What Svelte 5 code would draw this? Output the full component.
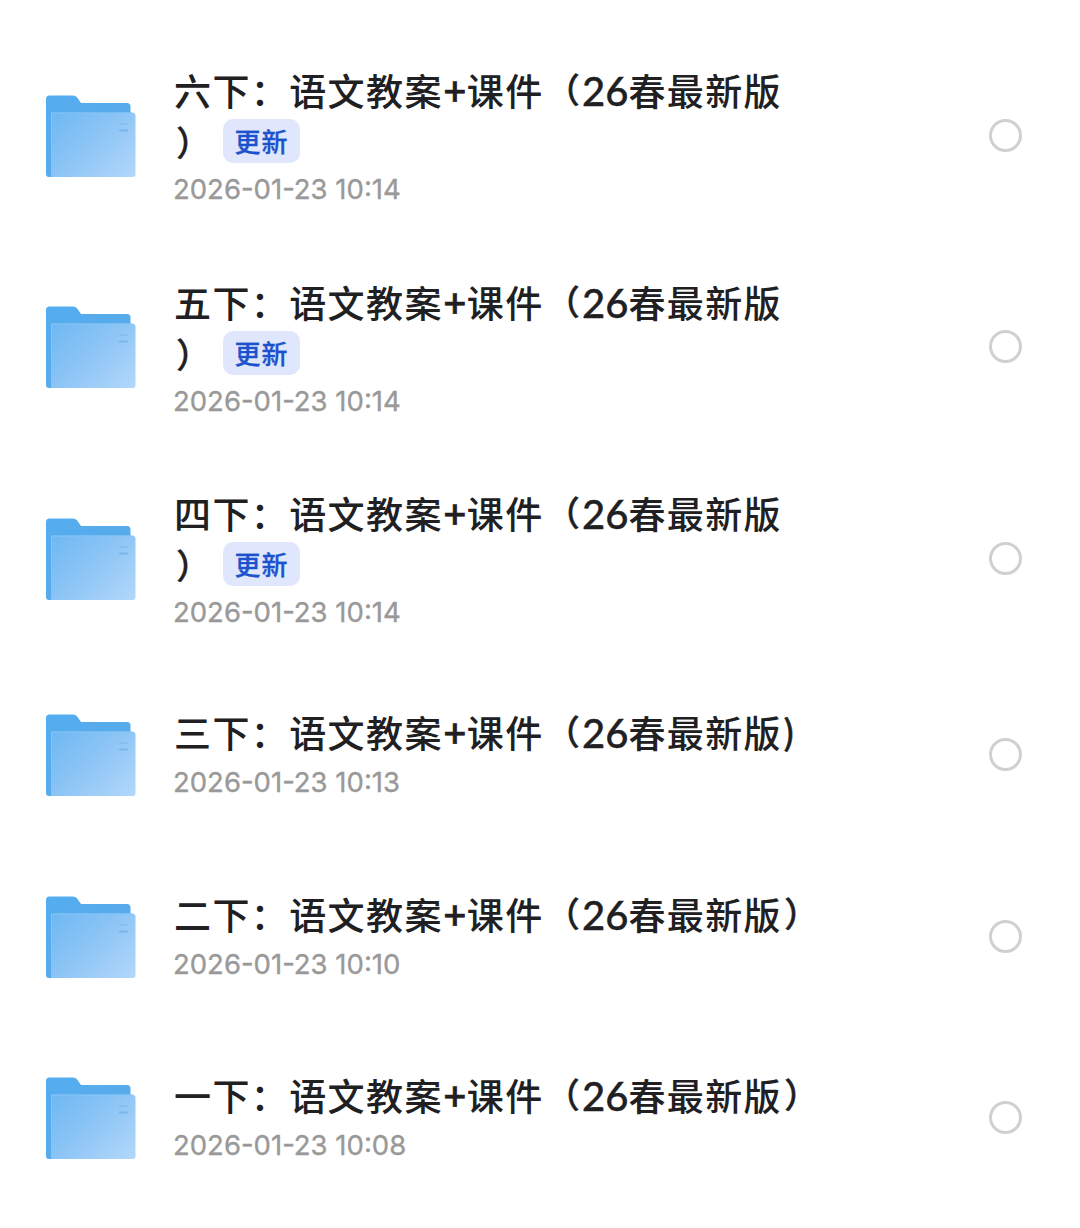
<script>

let folders = $state([
  { grade: "六下", close: "）", time: "2026-01-23 10:14", updated: true },
  { grade: "五下", close: "）", time: "2026-01-23 10:14", updated: true },
  { grade: "四下", close: "）", time: "2026-01-23 10:14", updated: true },
  { grade: "三下", close: ")", time: "2026-01-23 10:13", updated: false },
  { grade: "二下", close: "）", time: "2026-01-23 10:10", updated: false },
  { grade: "一下", close: "）", time: "2026-01-23 10:08", updated: false }
])

let selected = $state({})

function toggle(n) {
  selected[n] = !selected[n]
}

</script>

<svg class="defs" width="0" height="0" aria-hidden="true">
  <defs>
    <linearGradient id="back" x1="0" y1="0" x2="1" y2="1">
      <stop offset="0" stop-color="#54adef" />
      <stop offset="1" stop-color="#5aa9e8" />
    </linearGradient>
    <linearGradient id="front" x1="0" y1="0.1" x2="1" y2="0.9">
      <stop offset="0" stop-color="#71b9f3" />
      <stop offset="0.45" stop-color="#8bc4f5" />
      <stop offset="1" stop-color="#b0d6fa" />
    </linearGradient>
  </defs>
</svg>

<div class="list">
  {#each folders as folder, n}
    <div class="row" class:tall={folder.updated}>
      <svg class="folder" width="90" height="83" viewBox="0 0 90 83">
        <path d="M0 4Q0 0.5 3.500 0.5H27Q29.500 0.500 31 2.300L35 8H81Q84.500 8 84.500 11.500V82H3Q0 82 0 79Z" fill="url(#back)" />
        <path d="M5 17.500H86Q89.500 17.500 89.500 21V79Q89.500 82 86.500 82H5Z" fill="url(#front)" />
        <path d="M5.500 82V18H86" fill="none" stroke="#85c5f6" stroke-width="1" />
        <path d="M73 29H82" stroke="#84bdf0" stroke-width="1.500" />
        <path d="M73 35.500H82" stroke="#7ab6ee" stroke-width="2" />
      </svg>
      <div class="info">
        <div class="title">{folder.grade}：语文教案<span class="plus">+</span>课件<span class="paren">（</span><span class="num">26</span>春最新版{#if folder.updated}<br>{/if}<span class="paren" class:half={folder.close == ")"} class:wrapped={folder.updated}>{folder.close}</span>{#if folder.updated}<span class="badge">更新</span>{/if}</div>
        <div class="time">{folder.time}</div>
      </div>
      <button class="check" class:on={selected[n]} aria-label={folder.grade} onclick={() => toggle(n)}></button>
    </div>
  {/each}
</div>

<style>

  :global(body) {
    margin: 0;
    background: #fff;
  }

  .defs {
    display: block;
  }

  .list {
    box-sizing: border-box;
    height: 1228px;
    padding: 29.700px 58px 0 46px;
    overflow: hidden;
    font-family: "Noto Sans CJK SC", sans-serif;
  }

  .row {
    display: flex;
    align-items: center;
    height: 181.500px;
  }

  .row.tall {
    height: 211.500px;
  }

  .folder {
    flex: none;
    margin-top: 2px;
  }

  .info {
    width: 700px;
    margin-left: 38px;
    margin-bottom: 3px;
  }

  .tall .info {
    margin-top: 2px;
    margin-bottom: 1px;
  }

  .title {
    font-size: 37px;
    font-weight: 500;
    letter-spacing: 1.400px;
    line-height: 50px;
    white-space: nowrap;
    color: #202022;
  }

  .plus {
    display: inline-block;
    width: 24px;
    font-size: 39px;
    line-height: 1;
    letter-spacing: 0;
    text-indent: 1px;
    -webkit-text-stroke: 0.600px #202022;
  }

  .paren {
    display: inline-block;
    width: 38.400px;
    font-size: 34px;
    line-height: 1;
    text-align: center;
    letter-spacing: 0;
    vertical-align: 3px;
    -webkit-text-stroke: 0.500px #202022;
  }

  .paren.wrapped {
    vertical-align: 0;
  }

  .paren.half {
    width: 14px;
  }

  .num {
    font-family: Lato, sans-serif;
    font-size: 40px;
    letter-spacing: 0;
    line-height: 1;
    -webkit-text-stroke: 0.400px #202022;
  }

  .badge {
    display: inline-block;
    box-sizing: border-box;
    width: 77px;
    height: 44px;
    margin-top: 4px;
    margin-left: 10.500px;
    border-radius: 10px;
    background: #e0e7fc;
    color: #1c53cc;
    font-size: 26px;
    letter-spacing: 1px;
    line-height: 44px;
    text-align: center;
    vertical-align: top;
    -webkit-text-stroke: 0.300px #1c53cc;
  }

  .time {
    margin-top: 8px;
    margin-left: -1px;
    font-family: Inter, sans-serif;
    font-size: 27.500px;
    line-height: 34px;
    color: #999;
    -webkit-text-stroke: 0.350px #999;
  }

  .tall .time {
    margin-top: 7px;
  }

  .check {
    box-sizing: border-box;
    width: 33px;
    height: 33px;
    margin-left: auto;
    padding: 0;
    border: 3px solid #d0d0d0;
    border-radius: 50%;
    background: transparent;
  }

  .check.on {
    border-color: #1c53cc;
    background: #1c53cc;
  }

</style>
